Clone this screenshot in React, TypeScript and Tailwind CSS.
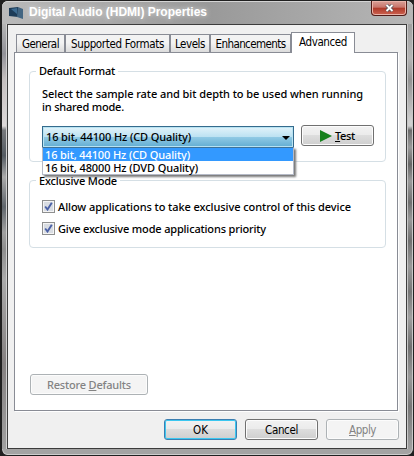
import React from "react";

const sans = "font-['Noto_Sans','Open_Sans',sans-serif]";
const tahoma = "[font-family:'DejaVu_Sans_Condensed','DejaVu_Sans',sans-serif] [font-stretch:75%] font-normal";

function Label({ children, width, className = "" }: { children: React.ReactNode; width: number; className?: string }) {
  const ref = React.useRef<HTMLSpanElement>(null);
  const [spacing, setSpacing] = React.useState(0);
  React.useLayoutEffect(() => {
    const el = ref.current;
    if (!el) return;
    el.style.letterSpacing = "0px";
    const next = (width - el.getBoundingClientRect().width) / (el.textContent || " ").length;
    el.style.letterSpacing = `${next}px`;
    setSpacing(next);
  }, [width]);
  return (
    <span className={`block whitespace-nowrap ${className}`} style={{ width }}>
      <span ref={ref} style={{ letterSpacing: spacing }}>{children}</span>
    </span>
  );
}

function Tab({ label, width, text }: { label: string; width: string; text: number }) {
  return (
    <div className={`flex h-[18px] justify-center border border-b-0 border-[#898c95] bg-linear-to-b from-[#f3f3f3] from-45% to-[#dcdcdc] pt-[1px] ${width}`}>
      <Label width={text} className={`${tahoma} text-[11.5px] leading-[16px]`}>{label}</Label>
    </div>
  );
}

function Check({ label, width }: { label: string; width: number }) {
  return (
    <label className="flex h-[22px] items-start">
      <span className="mr-[3px] h-[13px] w-[13px] border border-[#8e8f8f] bg-[#f4f4f4] p-px">
        <svg viewBox="0 0 9 9" className="block h-[9px] w-[9px] bg-[#d8dce2]">
          <path d="M1.2 4.5 3.5 7.5 7.8 .8" fill="none" stroke="#4b61a6" strokeWidth="1.9" />
        </svg>
      </span>
      <Label width={width} className="mt-[-1px] leading-[16px]">{label}</Label>
    </label>
  );
}

function Button({ children, className }: { children: React.ReactNode; className: string }) {
  return (
    <button className={`flex h-[21px] shrink-0 justify-center rounded-[3px] border ${className}`}>
      {children}
    </button>
  );
}

const face = "border-[#707070] shadow-[inset_0_0_0_1px_#fcfcfc] bg-[linear-gradient(#f2f2f2_0%,#ebebeb_48%,#dddddd_49%,#cfcfcf_100%)]";
const primary = "border-[#3c7fb1] shadow-[inset_0_0_0_1px_#3cc7f0] bg-[linear-gradient(#f2f2f2_0%,#ebebeb_48%,#dddddd_49%,#cfcfcf_100%)]";
const disabled = "border-[#adb2b5] shadow-[inset_0_0_0_1px_#fcfcfc] bg-[#f4f4f4] text-[#838383]";

export default function App() {
  return (
    <div className={`h-[456px] w-[414px] overflow-hidden bg-[#202020] text-black ${sans} text-[11px] font-medium`}>
      <div className="h-[456px] w-[414px] rounded-[7px] border border-l-2 border-[#202020] bg-[#a3a3a3] shadow-[inset_0_0_0_1px_#cccccc]">
        <header className="flex h-[23px] rounded-t-[6px] border-t border-[#d4d4d4] bg-linear-to-r from-[#bababa] via-[#999999] to-[#b6b6b6] pl-[7px]">
          <svg viewBox="0 0 15 14" className="mt-[4px] h-[14px] w-[15px]">
            <path d="M0 2 9 1V11L0 10Z" fill="#1d3c58" />
            <path d="M9 1 14 3V13L8 11Z" fill="#426582" />
            <path d="M2 3 8 2V8Z" fill="#3d6b91" />
          </svg>
          <Label width={178} className="mt-[2px] ml-[5px] font-['Liberation_Sans',sans-serif] text-[12px] leading-[16px] font-bold text-white [text-shadow:0_0_5px_#ddd]">Digital Audio (HDMI) Properties</Label>
          <div className="mt-[-1px] ml-[164px] flex h-[15px] w-[36px] items-center justify-center rounded-b-[4px] border border-t-0 border-[#521c18] bg-[linear-gradient(#d9a097,#c8756b_45%,#ae3929_50%,#cc6250)] shadow-[inset_0_0_0_1px_#e9b3a9]">
            <svg viewBox="0 0 9 8" className="h-[8px] w-[9px]"><path d="m1.5 1 6 6m0-6-6 6" stroke="#53545c" strokeWidth="3.4" /><path d="m1.5 1 6 6m0-6-6 6" stroke="white" strokeWidth="1.8" /></svg>
          </div>
        </header>
        <div className="flex">
          <aside className="h-[425px] w-[5px] shrink-0 border-r border-[#d0d0d0] bg-[linear-gradient(#b5b5b5_0%,#929298_7%,#c4bfbf_13%,#ddd9d9_24%,#77797c_25%,#545b62_31%,#aaaaaa_36%,#60666c_43%,#a0a0a0_49%,#8e8e8e_53%,#aaaaaa_60%,#858181_80%,#a0a0a0)]" />
          <main className="h-[425px] w-[400px] shrink-0 border border-[#3c3c3c] bg-[#f0f0f0] px-[6px] pt-[7px]">
            <nav className="flex h-[20px] items-end pl-[2px]">
              <Tab label="General" width="w-[49px]" text={37} />
              <Tab label="Supported Formats" width="w-[105px]" text={93} />
              <Tab label="Levels" width="w-[40px]" text={30} />
              <Tab label="Enhancements" width="w-[81px]" text={70} />
              <div className="z-10 -mb-px flex h-[21px] w-[64px] justify-center self-start border border-b-0 border-[#898c95] bg-white pt-[1px]">
                <Label width={48} className={`${tahoma} text-[11.5px] leading-[16px]`}>Advanced</Label>
              </div>
            </nav>
            <section className="h-[359px] w-[384px] border border-[#898c95] bg-white pt-[18px] pl-[14px] shadow-[1px_1px_0_#fff]">
              <fieldset className="relative h-[91px] w-[357px] rounded-[4px] border border-[#d5dfe5] pt-[18px] pl-[12px]">
                <div className="absolute top-[-9px] left-[6px] bg-white px-[3px]"><Label width={76} className="leading-[16px]">Default Format</Label></div>
                <Label width={321} className="mt-[-3px] h-[13px] leading-[13px]">Select the sample rate and bit depth to be used when running</Label>
                <Label width={82} className="h-[13px] leading-[13px]">in shared mode.</Label>
                <div className="mt-[13px] flex">
                  <div className="relative h-[22px] w-[252px] border border-[#356b8d] bg-[linear-gradient(#e2f3fa,#bde2f2_48%,#91cae5_50%,#62add2)] pl-[3px] shadow-[inset_0_0_0_1px_#b8e3f2]">
                    <Label width={145} className="mt-[2px] leading-[16px]">16 bit, 44100 Hz (CD Quality)</Label>
                    <div className="absolute top-[9px] right-[3px] border-x-4 border-t-4 border-x-transparent border-t-black" />
                    <div className="absolute top-[20px] left-[-1px] z-20 h-[28px] w-[252px] border border-[#b5bac7] border-t-[#3d729a] bg-white shadow-[2px_2px_2px_#777]">
                      <div className="h-[13px] bg-[#3399ff] pl-[2px] text-white"><Label width={145} className="h-[13px] leading-[13px]">16 bit, 44100 Hz (CD Quality)</Label></div>
                      <div className="h-[13px] pl-[2px]"><Label width={153} className="h-[13px] leading-[13px]">16 bit, 48000 Hz (DVD Quality)</Label></div>
                    </div>
                  </div>
                  <Button className={`-mt-px ml-[7px] w-[73px] pt-[2px] ${face}`}>
                    <svg viewBox="0 0 12 12" className="mt-[2px] mr-[3px] h-[12px] w-[12px]"><path d="M0 0 12 6 0 12Z" fill="#16811d" /></svg>
                    <Label width={20} className="leading-[16px]"><u>T</u>est</Label>
                  </Button>
                </div>
              </fieldset>
              <fieldset className="relative mt-[18px] h-[68px] w-[357px] rounded-[4px] border border-[#d5dfe5] pt-[19px] pl-[12px]">
                <div className="absolute top-[-7px] left-[6px] bg-white px-[3px]"><Label width={78} className="leading-[14px]">Exclusive Mode</Label></div>
                <Check label="Allow applications to take exclusive control of this device" width={293} />
                <Check label="Give exclusive mode applications priority" width={208} />
              </fieldset>
              <Button className={`mt-[126px] ml-px w-[118px] pt-[2px] ${disabled}`}><Label width={84} className="leading-[16px]">Restore <u>D</u>efaults</Label></Button>
            </section>
            <footer className="mt-[8px] flex gap-[8px] pl-[150px]">
              <Button className={`w-[73px] pt-[2px] ${primary}`}><Label width={15} className={`${tahoma} text-[11.5px] leading-[16px]`}>OK</Label></Button>
              <Button className={`w-[73px] pt-[2px] ${face}`}><Label width={33} className={`${tahoma} text-[11.5px] leading-[16px]`}>Cancel</Label></Button>
              <Button className={`w-[73px] pt-[2px] ${disabled}`}><Label width={27} className={`${tahoma} text-[11.5px] leading-[16px]`}><u>A</u>pply</Label></Button>
            </footer>
          </main>
          <aside className="h-[425px] w-[6px] shrink-0 border-x border-[#c8c8c8] bg-[linear-gradient(#a0a0a0_0%,#b5b5b5_8%,#929292_13%,#d0d0d0_23%,#d0d0d0_24%,#6c6c6c_25%,#999999_29%,#666666_33%,#999999_37%,#707070_42%,#999999_46%,#707070_51%,#9a9a9a_57%,#777777_63%,#a0a0a0_69%,#707070_76%,#999999_83%,#777777_90%,#a0a0a0)]" />
        </div>
      </div>
    </div>
  );
}
